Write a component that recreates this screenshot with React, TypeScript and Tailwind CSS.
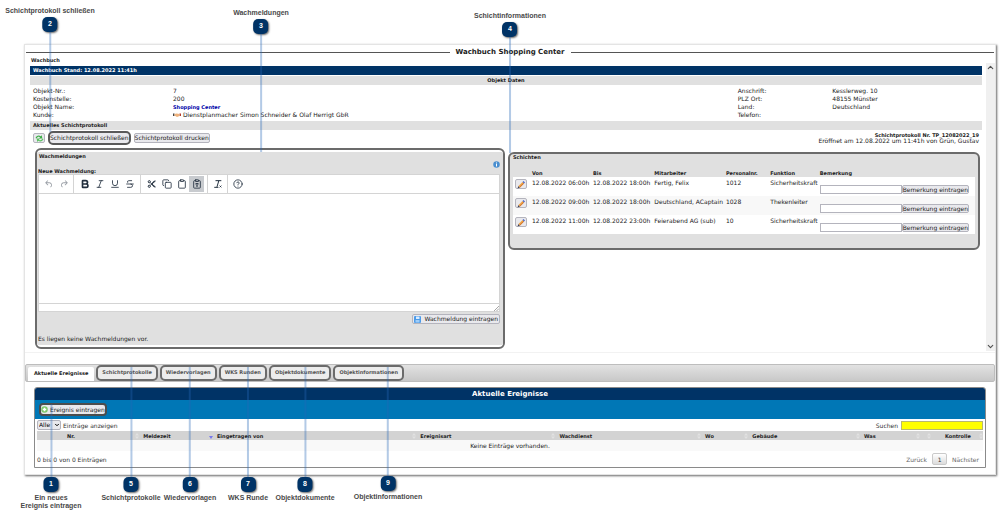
import React from 'react'
import {
  Bold,
  ChevronDown,
  ChevronUp,
  CircleQuestionMark,
  Clipboard,
  ClipboardType,
  Copy,
  Italic,
  Strikethrough,
  Underline,
} from 'lucide-react'

const iconClass = 'h-[10px] w-[10px]'

const UndoIcon = ({ className = '' }: { className?: string }) => (
  <svg className={className} viewBox="0 0 24 24" fill="currentColor">
    <path d="M6.4 8H12c3.7 0 6.2 2 6.8 5.1.6 2.7-.4 5.6-2.3 6.8a1 1 0 0 1-1-1.8c1.1-.6 1.8-2.7 1.4-4.6-.5-2.1-2.1-3.5-4.9-3.5H6.4l3.3 3.3a1 1 0 1 1-1.4 1.4l-5-5a1 1 0 0 1 0-1.4l5-5a1 1 0 0 1 1.4 1.4L6.4 8z" />
  </svg>
)

const CutIcon = () => (
  <svg className={iconClass} viewBox="0 0 24 24" fill="none" stroke="currentColor" strokeWidth="2.4">
    <path d="M20 5 8 15M20 19 8 9" />
    <path d="M20 5c-3 0-5 1-7 4M20 19c-3 0-5-1-7-4" />
    <circle cx="5.5" cy="6.5" r="2.6" />
    <circle cx="5.5" cy="17.5" r="2.6" />
  </svg>
)

const ClearFormatIcon = () => (
  <svg className={iconClass} viewBox="0 0 24 24" fill="none" stroke="currentColor" strokeWidth="2.4">
    <path d="M6 4h14M14 4 9.5 19M3 20h10M16 16l4 4M20 16l-4 4" />
  </svg>
)

const RefreshIcon = () => (
  <svg className="h-[9px] w-[9px]" viewBox="0 0 16 16">
    <path d="M1 7c1-4 6-6 9-3l2-2 1 6H7l2-2C7 4 4 5 3 8z" fill="#3fae49" />
    <path d="M15 9c-1 4-6 6-9 3l-2 2-1-6h6l-2 2c2 2 5 1 6-2z" fill="#5cc262" />
  </svg>
)

const PencilIcon = () => (
  <svg className="h-[9px] w-[9px]" viewBox="0 0 18 18">
    <path d="M1 17l2-5 3 3z" fill="#3b3b4d" />
    <path d="M3 12l8-8 3 3-8 8z" fill="#f2a544" />
    <path d="M5 14l8-8 1 1-8 8z" fill="#c8692c" />
    <path d="M11 4l2-2 3 3-2 2z" fill="#4a66c8" />
  </svg>
)

const SaveIcon = () => (
  <svg className="h-[7px] w-[7px]" viewBox="0 0 14 14">
    <rect width="14" height="14" rx="2" fill="#4c9be8" />
    <rect x="4" y="1" width="7" height="5" fill="#d9ecff" />
    <rect x="3" y="8" width="8" height="5" fill="#9fcdf8" />
  </svg>
)

const AddIcon = () => (
  <svg className="h-[7px] w-[7px]" viewBox="0 0 14 14">
    <circle cx="7" cy="7" r="6.5" fill="#7cc768" />
    <path d="M7 3.500v7M3.500 7h7" stroke="#fff" strokeWidth="3" />
  </svg>
)

const InfoIcon = () => (
  <svg className="h-[7px] w-[7px]" viewBox="0 0 14 14">
    <circle cx="7" cy="7" r="6.5" fill="#4a8fd0" />
    <path d="M7 6v5M7 3v2" stroke="#fff" strokeWidth="2" />
  </svg>
)

const HandshakeIcon = () => (
  <svg className="h-[6px] w-2" viewBox="0 0 16 10">
    <path d="M0 2h3v5H0z" fill="#444" />
    <path d="M13 2h3v5h-3z" fill="#b33a2e" />
    <path d="M3 3l4-1 6 1v4L8 9 3 6z" fill="#eeb27c" />
  </svg>
)

const SortIcon = ({ active = false }: { active?: boolean }) => (
  <svg className="h-[6px] w-1 shrink-0" viewBox="0 0 8 12">
    {active ? (
      <path d="M0 6h8L4 12z" fill="#7777ee" />
    ) : (
      <path d="M0 5l4-5 4 5zM0 7h8l-4 5z" fill="#e2e2e2" />
    )}
  </svg>
)

interface ButtonProps {
  children: React.ReactNode
  className?: string
  label?: string
}

const Button: React.FC<ButtonProps> = ({ children, className = '', label }) => (
  <button
    type="button"
    aria-label={label}
    className={`flex items-center justify-center whitespace-nowrap rounded-[2px] border border-[#b4b4bd] bg-[#e9e9ed] leading-[8px] text-[#222] ${className}`}
  >
    {children}
  </button>
)

const objectData = [
  ['Objekt-Nr.:', '7', 'Anschrift:', 'Kesslerweg. 10'],
  ['Kostenstelle:', '200', 'PLZ Ort:', '48155 Münster'],
  ['Objekt Name:', 'Shopping Center', 'Land:', 'Deutschland'],
  ['Kunde:', 'Dienstplanmacher Simon Schneider & Olaf Herrigt GbR', 'Telefon:', ''],
]

const ObjectData = () => (
  <div className="py-[2px]">
    {objectData.map(([label, value, label2, value2]) => (
      <div key={label} className="flex h-2 items-center px-[3px] leading-[8px]">
        <span className="w-[14.8%]">{label}</span>
        <span className="flex w-[59.7%] items-center gap-[2px]">
          {label === 'Kunde:' && <HandshakeIcon />}
          {label === 'Objekt Name:' ? (
            <a href="#objekt" className="text-[5px] font-bold text-[#0000a8]">{value}</a>
          ) : (
            value
          )}
        </span>
        <span className="w-[10%]">{label2}</span>
        <span>{value2}</span>
      </div>
    ))}
  </div>
)

const toolbar = [
  {
    group: 'px-[2px]',
    items: [
      { name: 'Rückgängig', icon: <UndoIcon className={`${iconClass} text-[#9a9fa6]`} /> },
      { name: 'Wiederholen', icon: <UndoIcon className={`${iconClass} -scale-x-100 text-[#9a9fa6]`} /> },
    ],
  },
  {
    group: 'px-[3px]',
    items: [
      { name: 'Fett', icon: <Bold className={iconClass} strokeWidth={4} /> },
      { name: 'Kursiv', icon: <Italic className={iconClass} /> },
      { name: 'Unterstrichen', icon: <Underline className={iconClass} /> },
      { name: 'Durchgestrichen', icon: <Strikethrough className={iconClass} /> },
    ],
  },
  {
    group: 'px-[3px]',
    items: [
      { name: 'Ausschneiden', icon: <CutIcon /> },
      { name: 'Kopieren', icon: <Copy className={iconClass} /> },
      { name: 'Einfügen', icon: <Clipboard className={iconClass} /> },
      { name: 'Als Text einfügen', icon: <ClipboardType className={iconClass} />, active: true },
    ],
  },
  { group: 'px-[2px]', items: [{ name: 'Formatierung entfernen', icon: <ClearFormatIcon /> }] },
  { group: 'px-[2px]', items: [{ name: 'Hilfe', icon: <CircleQuestionMark className={iconClass} /> }] },
]

const Editor = () => (
  <div className="border border-[#d4d4d4] bg-white">
    <div className="flex h-[19px] items-center border-b border-[#d4d4d4] text-[#222f3e]">
      {toolbar.map((section, i) => (
        <div
          key={i}
          className={`flex h-full items-center ${section.group} ${i < toolbar.length - 1 ? 'border-r border-[#d4d4d4]' : ''}`}
        >
          {section.items.map((item) => (
            <button
              key={item.name}
              type="button"
              aria-label={item.name}
              className={`flex h-4 w-[15px] items-center justify-center ${
                'active' in item ? 'bg-[#c8cbcf]' : ''
              }`}
            >
              {item.icon}
            </button>
          ))}
        </div>
      ))}
    </div>
    <textarea aria-labelledby="neue-wachmeldung" className="block h-[109px] w-full resize-none outline-none" />
    <div className="flex h-2 items-end justify-end border-t border-[#d4d4d4]">
      <svg className="h-[5px] w-[5px]" viewBox="0 0 10 10" stroke="#8a8a8a" strokeWidth="1.5">
        <path d="M0 10L10 0M5 10l5-5" />
      </svg>
    </div>
  </div>
)

const Wachmeldungen = () => (
  <section className="w-[470px] grow rounded-md border-2 border-[#6b6b6b] bg-white pt-[2px] pb-[2px]">
    <div className="h-full bg-[#e0e0e0] px-px">
      <h3 className="px-px text-[5px] leading-[9px] font-bold">Wachmeldungen</h3>
      <div className="flex justify-end pr-[2px]">
        <InfoIcon />
      </div>
      <p id="neue-wachmeldung" className="text-[5px] leading-[6px] font-bold">Neue Wachmeldung:</p>
      <div className="pr-[2px]">
        <Editor />
        <div className="mt-[2px] flex justify-end">
          <Button className="h-[10px] gap-[3px] px-px">
            <SaveIcon />
            Wachmeldung eintragen
          </Button>
        </div>
      </div>
      <p className="mt-[11px] pb-[2px] leading-[8px]">Es liegen keine Wachmeldungen vor.</p>
    </div>
  </section>
)

const shifts = [
  ['12.08.2022 06:00h', '12.08.2022 18:00h', 'Fertig, Felix', '1012', 'Sicherheitskraft'],
  ['12.08.2022 09:00h', '12.08.2022 18:00h', 'Deutschland, ACaptain', '1028', 'Thekenleiter'],
  ['12.08.2022 11:00h', '12.08.2022 23:00h', 'Feierabend AG (sub)', '10', 'Sicherheitskraft'],
]

const Schichten = () => (
  <section className="mt-1 w-[472px] grow self-start rounded-md border-2 border-[#6b6b6b] bg-[#e0e0e0] px-[3px] pb-[14px]">
    <h3 className="text-[5px] leading-[6px] font-bold">Schichten</h3>
    <table className="mt-[9px] w-full table-fixed text-left">
      <thead>
        <tr className="h-2 text-[5px] leading-[8px]">
          <th className="w-[4.1%]" aria-label="Bearbeiten" />
          <th className="w-[13.2%]">Von</th>
          <th className="w-[13.3%]">Bis</th>
          <th className="w-[15.5%]">Mitarbeiter</th>
          <th className="w-[9.6%]">Personalnr.</th>
          <th className="w-[10.7%]">Funktion</th>
          <th>Bemerkung</th>
        </tr>
      </thead>
      <tbody>
        {shifts.map((row) => (
          <tr key={row[0]} className="h-[19px] bg-white align-top leading-[8px] whitespace-nowrap even:bg-[#f8f8f8]">
            <td className="pt-[2px] pl-[2px]">
              <Button label="Schicht bearbeiten" className="h-[10px] w-3">
                <PencilIcon />
              </Button>
            </td>
            {row.map((cell, i) => (
              <td key={i} className="pt-[2px]">{cell}</td>
            ))}
            <td className="pt-2">
              <div className="flex items-center">
                <input
                  type="text"
                  aria-label="Bemerkung"
                  className="h-[9px] w-[82px] border border-[#b4b4bd] bg-white px-px"
                />
                <Button className="h-[9px]">Bemerkung eintragen</Button>
              </div>
            </td>
          </tr>
        ))}
      </tbody>
    </table>
  </section>
)

const Wachbuch = () => (
  <div className="flex h-[288px]">
    <div className="min-w-0 grow pt-[3px] pr-1 pl-[5px]">
      <h2 className="h-[9px] bg-[#003366] px-[3px] text-[5px] leading-[9px] font-bold text-white">
        Wachbuch Stand: 12.08.2022 11:41h
      </h2>
      <h3 className="mt-px h-[9px] bg-[#e0e0e0] text-center text-[5px] leading-[9px] font-bold">Objekt Daten</h3>
      <ObjectData />
      <h3 className="h-[9px] bg-[#e0e0e0] px-[3px] text-[5px] leading-[9px] font-bold">
        Aktuelles Schichtprotokoll
      </h3>
      <div className="flex items-center px-[3px] py-px">
        <Button label="Aktualisieren" className="mr-[3px] h-[10px] w-3">
          <RefreshIcon />
        </Button>
        <button
          type="button"
          className="h-[14px] rounded-[5px] border-2 border-[#5a5a5a] bg-[#e9e9ed] leading-[8px] whitespace-nowrap"
        >
          Schichtprotokoll schließen
        </button>
        <Button className="ml-[3px] h-[10px]">Schichtprotokoll drucken</Button>
        <div className="ml-auto text-right leading-[6px]">
          <p className="text-[5px] font-bold">Schichtprotokoll Nr. TP_12082022_19</p>
          <p>Eröffnet am 12.08.2022 um 11:41h von Grün, Gustav</p>
        </div>
      </div>
      <div className="mt-[2px] flex gap-[3px] pr-[2px] pl-[5px]">
        <Wachmeldungen />
        <Schichten />
      </div>
    </div>
    <div className="flex w-[9px] shrink-0 flex-col justify-between bg-[#f0f0f0] text-[#505050]">
      <ChevronUp className="h-[9px] w-[9px]" strokeWidth={3} />
      <ChevronDown className="h-[9px] w-[9px]" strokeWidth={3} />
    </div>
  </div>
)

const tabs = ['Schichtprotokolle', 'Wiedervorlagen', 'WKS Runden', 'Objektdokumente', 'Objektinformationen']

const Tabs = () => (
  <nav className="flex h-[18px] items-end gap-[2px] rounded-[2px] border border-[#bdbdbd] bg-linear-to-b from-[#e2e2e2] to-[#c8c8c8] pl-[2px] text-[5px] font-bold">
    <a href="#ereignisse" className="flex h-[14px] items-center rounded-t-[2px] bg-white px-[6px] text-[#222]">
      Aktuelle Ereignisse
    </a>
    {tabs.map((tab) => (
      <a
        key={tab}
        href="#tab"
        className="flex h-4 items-center rounded-[5px] border-2 border-[#6b6b6b] bg-[#ececec] px-1 text-[#555]"
      >
        {tab}
      </a>
    ))}
  </nav>
)

const columns = [
  { name: 'Nr.', width: 'w-[10.8%]', indent: 'pl-[30px]' },
  { name: 'Meldezeit', width: 'w-[7.8%]', indent: 'pl-1', active: true },
  { name: 'Eingetragen von', width: 'w-[21.5%]', indent: 'pl-1' },
  { name: 'Ereignisart', width: 'w-[14.7%]', indent: 'pl-1' },
  { name: 'Wachdienst', width: 'w-[15.4%]', indent: 'pl-1' },
  { name: 'Wo', width: 'w-[5%]', indent: 'pl-1' },
  { name: 'Gebäude', width: 'w-[11.8%]', indent: 'pl-1' },
  { name: 'Was', width: 'w-[6.3%]', indent: 'pl-1' },
  { name: '', width: 'w-[1.2%]', indent: 'pl-1' },
  { name: 'Kontrolle', width: 'w-[5.5%]', indent: 'pl-[14px]' },
]

const Ereignisse = () => (
  <section id="ereignisse" className="mx-[9px] mt-[5px] rounded-t-[3px] border border-[#8a8a8a]">
    <h2 className="h-3 rounded-t-[2px] bg-[#003366] text-center text-[7px] leading-[12px] font-bold text-white">
      Aktuelle Ereignisse
    </h2>
    <div className="flex h-[19px] items-center bg-[#0077b6] px-1">
      <button
        type="button"
        className="flex h-[13px] items-center gap-[2px] rounded-[4px] border-2 border-[#4d4d4d] bg-[#e9e9ed] leading-[8px] whitespace-nowrap"
      >
        <AddIcon />
        Ereignis eintragen
      </button>
    </div>
    <div className="px-[2px]">
      <div className="flex h-3 items-center justify-between text-[#333]">
        <label className="flex items-center gap-[2px]">
          <span className="relative">
            <select className="block h-[10px] w-[24px] appearance-none rounded-[2px] border border-[#b4b4bd] bg-[#e9e9ed] pl-px text-[6px] leading-[8px] text-black">
              <option>Alle</option>
            </select>
            <ChevronDown className="pointer-events-none absolute top-[2px] right-px h-[6px] w-[6px] text-black" strokeWidth={4} />
          </span>
          Einträge anzeigen
        </label>
        <label className="flex items-center gap-[3px]">
          Suchen
          <input type="search" className="h-[9px] w-[82px] border border-[#b8b870] bg-[#ffff00]" />
        </label>
      </div>
      <table className="w-full table-fixed">
        <thead>
          <tr className="h-[9px] bg-[#d3d3d3] text-[5px] leading-[8px]">
            {columns.map((col) => (
              <th key={col.name} className={`${col.width} ${col.indent}`}>
                <span className="flex items-center justify-between">
                  <span className="whitespace-nowrap">{col.name}</span>
                  <SortIcon active={col.active} />
                </span>
              </th>
            ))}
          </tr>
        </thead>
        <tbody>
          <tr className="h-[11px] bg-[#f9f9f9] text-center">
            <td colSpan={10} className="leading-[8px]">Keine Einträge vorhanden.</td>
          </tr>
        </tbody>
      </table>
      <div className="flex h-4 items-center justify-between text-[#333]">
        <span>0 bis 0 von 0 Einträgen</span>
        <div className="flex items-center gap-[5px] pr-1 text-[#666]">
          <button type="button">Zurück</button>
          <button
            type="button"
            className="h-3 w-[15px] rounded-[2px] border border-[#cacaca] bg-linear-to-b from-white to-[#dcdcdc] text-[#333]"
          >
            1
          </button>
          <button type="button">Nächster</button>
        </div>
      </div>
    </div>
  </section>
)

interface CalloutProps {
  number: number
  lines: string[]
  position: string
  stem: string
  below?: boolean
}

// Numbered marker with its label and a thin line that runs to the explained control
const Callout: React.FC<CalloutProps> = ({ number, lines, position, stem, below = false }) => (
  <div
    className={`pointer-events-none absolute flex -translate-x-1/2 items-center ${below ? 'flex-col-reverse' : 'flex-col'} ${position}`}
  >
    <p className="text-center font-['Liberation_Sans',Arial,sans-serif] text-[7px] leading-[8px] font-bold whitespace-nowrap text-[#4a4a4a]">
      {lines.map((line) => (
        <span key={line} className="block">{line}</span>
      ))}
    </p>
    <span className="my-[2px] flex h-[15px] w-[15px] items-center justify-center rounded-[5px] bg-[#003366] font-['Liberation_Sans',Arial,sans-serif] text-[7px] font-bold text-white shadow-[1px_1px_2px_rgba(0,0,0,0.6)]">
      {number}
    </span>
    <span className={`w-[2px] bg-[#2468b8]/35 ${below ? '-mb-[2px]' : '-mt-[2px]'} ${stem}`} />
  </div>
)

const callouts: CalloutProps[] = [
  { number: 2, lines: ['Schichtprotokoll schließen'], position: 'left-[50px] top-[7px]', stem: 'h-[100px]' },
  { number: 3, lines: ['Wachmeldungen'], position: 'left-[261px] top-[9px]', stem: 'h-[118px]' },
  { number: 4, lines: ['Schichtinformationen'], position: 'left-[510px] top-[12px]', stem: 'h-[116px]' },
  { number: 1, lines: ['Ein neues', 'Ereignis eintragen'], position: 'left-[51px] top-[404px]', stem: 'h-[73px]', below: true },
  { number: 5, lines: ['Schichtprotokolle'], position: 'left-[131px] top-[367px]', stem: 'h-[110px]', below: true },
  { number: 6, lines: ['Wiedervorlagen'], position: 'left-[190px] top-[367px]', stem: 'h-[110px]', below: true },
  { number: 7, lines: ['WKS Runde'], position: 'left-[248px] top-[367px]', stem: 'h-[110px]', below: true },
  { number: 8, lines: ['Objektdokumente'], position: 'left-[305px] top-[367px]', stem: 'h-[110px]', below: true },
  { number: 9, lines: ['Objektinformationen'], position: 'left-[388px] top-[367px]', stem: 'h-[109px]', below: true },
]

export default function App() {
  return (
    <div className="relative min-h-screen bg-white pt-11 pr-1 pl-6 font-['DejaVu_Sans',Verdana,sans-serif] text-[6px] text-[#222]">
      <main className="border border-[#e4e4e4] bg-white pb-[6px] shadow-[1px_1px_2px_rgba(0,0,0,0.6)]">
        <div className="flex h-[14px] items-center gap-[6px] px-px">
          <span className="h-px grow bg-[#555]" />
          <h1 className="text-[7px] leading-[14px] font-bold">Wachbuch Shopping Center</h1>
          <span className="h-px grow bg-[#555]" />
        </div>
        <p className="h-1 px-[6px] text-[5px] leading-[3px] font-bold">Wachbuch</p>
        <Wachbuch />
        <div className="mt-px h-3 border-t border-[#f2f2f2]" />
        <Tabs />
        <Ereignisse />
      </main>
      {callouts.map((callout) => (
        <Callout key={callout.number} {...callout} />
      ))}
    </div>
  )
}
